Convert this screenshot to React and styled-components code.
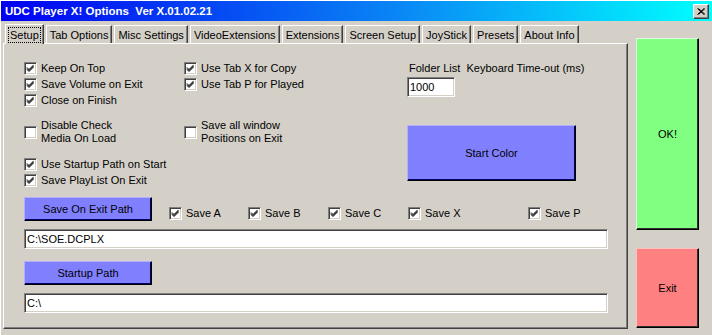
import styled, { createGlobalStyle } from 'styled-components';

const GlobalStyle = createGlobalStyle`
  body {
    margin: 0;
    background: #d4d0c8;
    font-family: "Liberation Sans", Arial, sans-serif;
    font-size: 11px;
    color: #000;
  }
`;

const Window = styled.div`
  width: 712px;
  height: 335px;
  box-sizing: border-box;
  background: #d4d0c8;
  border-left: 1px solid #fff;
  border-top: 1px solid #fff;
  overflow: hidden;
`;

const TitleBar = styled.div`
  height: 20px;
  display: flex;
  align-items: center;
  justify-content: space-between;
  padding: 0 3px 0 4px;
  background: linear-gradient(to right, #0000f0, #0a84f5 55%, #00ffff);
  color: #fff;
  font-weight: bold;
  font-size: 11.5px;
  white-space: pre;
`;

const CloseBox = styled.div`
  width: 14px;
  height: 13px;
  background: #d4d0c8;
  border: 1px solid;
  border-color: #fff #404040 #404040 #fff;
  box-shadow: inset -1px -1px #808080;
  display: flex;
  align-items: center;
  justify-content: center;
`;

const Main = styled.div`
  display: flex;
  gap: 8px;
  padding: 2px 0 0 2px;
`;

const TabArea = styled.div`
  width: 625px;
  flex: none;
  display: flex;
  flex-direction: column;
`;

const TabStrip = styled.div`
  display: flex;
  align-items: flex-end;
  height: 20px;
  padding-left: 2px;
  gap: 2px;
`;

const Tab = styled.div`
  height: ${p => (p.$active ? 20 : 18)}px;
  padding: 0 3px;
  box-sizing: border-box;
  display: flex;
  align-items: center;
  flex: none;
  white-space: nowrap;
  border: 1px solid;
  border-bottom: none;
  border-color: #fff #404040 transparent #fff;
  box-shadow: inset -1px 0 #808080;
  background: #d4d0c8;
  position: relative;
  z-index: ${p => (p.$active ? 1 : 0)};
  margin-bottom: ${p => (p.$active ? -1 : 0)}px;
`;

const TabText = styled.span`
  padding: 0 ${p => (p.$focus ? 1 : 0)}px;
  outline: ${p => (p.$focus ? '1px dotted #000' : 'none')};
  line-height: 14px;
`;

const Panel = styled.div`
  height: 286px;
  box-sizing: border-box;
  border: 1px solid;
  border-color: #fff #404040 #404040 #fff;
  box-shadow: inset -1px -1px #808080;
  padding: 16px 20px 0 20px;
`;

const TopGrid = styled.div`
  display: grid;
  grid-template-columns: 160px 223px 1fr;
  grid-template-rows: 48px 26px 32px;
  row-gap: 11px;
`;

const Group = styled.div`
  grid-column: ${p => p.$col};
  grid-row: ${p => p.$row};
  display: flex;
  flex-direction: column;
`;

const CheckRow = styled.label`
  display: flex;
  align-items: center;
  gap: 4px;
  height: ${p => (p.$tall ? 26 : 16)}px;
  width: ${p => (p.$w ? `${p.$w}px` : 'auto')};
  flex: none;
  line-height: 13px;
  white-space: pre;
`;

const Box = styled.span`
  width: 13px;
  height: 13px;
  box-sizing: border-box;
  background: #fff;
  border: 1px solid;
  border-color: #808080 #fff #fff #808080;
  box-shadow: inset 1px 1px #404040, inset -1px -1px #d4d0c8;
  display: flex;
  align-items: center;
  justify-content: center;
  flex: none;
`;

const Side = styled.div`
  grid-column: 3;
  grid-row: 1 / 4;
  display: flex;
  flex-direction: column;
  align-items: flex-start;
`;

const FieldLabel = styled.div`
  line-height: 16px;
  padding-left: 2px;
  white-space: pre;
`;

const Field = styled.div`
  width: ${p => p.$w}px;
  height: 20px;
  margin-top: ${p => p.$mt || 0}px;
  box-sizing: border-box;
  background: #fff;
  border: 1px solid;
  border-color: #808080 #fff #fff #808080;
  box-shadow: inset 1px 1px #404040, inset -1px -1px #d4d0c8;
  padding: 0 2px;
  display: flex;
  align-items: center;
`;

const ColorButton = styled.div`
  width: ${p => p.$w}px;
  height: ${p => p.$h}px;
  margin-top: ${p => p.$mt || 0}px;
  box-sizing: border-box;
  background: ${p => p.$bg};
  border: 1px solid;
  border-color: ${p => p.$light} #000 #000 ${p => p.$light};
  box-shadow: inset -1px -1px ${p => p.$shade};
  display: flex;
  align-items: center;
  justify-content: center;
  flex: none;
`;

const SaveRow = styled.div`
  display: flex;
  align-items: flex-start;
  margin-top: 9px;
`;

const SaveChecks = styled.div`
  display: flex;
  margin: 8px 0 0 17px;
`;

const RightColumn = styled.div`
  display: flex;
  flex-direction: column;
  gap: 18px;
  padding-top: 15px;
`;

const Check = ({ checked, children, tall, w }) => (
  <CheckRow $tall={tall} $w={w}>
    <Box>
      {checked && (
        <svg width="9" height="9" viewBox="0 0 9 9">
          <path d="M1 3.5 L3 5.5 L7.5 1 M1 4.5 L3 6.5 L7.5 2 M1 5.5 L3 7.5 L7.5 3" stroke="#000" strokeWidth="1" fill="none" />
        </svg>
      )}
    </Box>
    <span>{children}</span>
  </CheckRow>
);

const tabs = ['Setup', 'Tab Options', 'Misc Settings', 'VideoExtensions', 'Extensions', 'Screen Setup', 'JoyStick', 'Presets', 'About Info'];

const blue = { $bg: '#8080ff', $light: '#b0b0ff', $shade: '#000060' };

export default function App() {
  return (
    <>
      <GlobalStyle />
      <Window>
        <TitleBar>
          <span>UDC Player X! Options  Ver X.01.02.21</span>
          <CloseBox>
            <svg width="8" height="7" viewBox="0 0 8 7">
              <path d="M0.5 0.5 L7 6.5 M1.5 0.5 L8 6.5 M7 0.5 L0.5 6.5 M8 0.5 L1.5 6.5" stroke="#000" strokeWidth="1" />
            </svg>
          </CloseBox>
        </TitleBar>
        <Main>
          <TabArea>
            <TabStrip>
              {tabs.map((t, i) => (
                <Tab key={t} $active={i === 0}>
                  <TabText $focus={i === 0}>{t}</TabText>
                </Tab>
              ))}
            </TabStrip>
            <Panel>
              <TopGrid>
                <Group $col={1} $row={1}>
                  <Check checked>Keep On Top</Check>
                  <Check checked>Save Volume on Exit</Check>
                  <Check checked>Close on Finish</Check>
                </Group>
                <Group $col={1} $row={2}>
                  <Check tall>{'Disable Check\nMedia On Load'}</Check>
                </Group>
                <Group $col={1} $row={3}>
                  <Check checked>Use Startup Path on Start</Check>
                  <Check checked>Save PlayList On Exit</Check>
                </Group>
                <Group $col={2} $row={1}>
                  <Check checked>Use Tab X for Copy</Check>
                  <Check checked>Use Tab P for Played</Check>
                </Group>
                <Group $col={2} $row={2}>
                  <Check tall>{'Save all window\nPositions on Exit'}</Check>
                </Group>
                <Side>
                  <FieldLabel>Folder List  Keyboard Time-out (ms)</FieldLabel>
                  <Field $w={48} $mt={1}>1000</Field>
                  <ColorButton {...blue} $w={169} $h={56} $mt={28}>Start Color</ColorButton>
                </Side>
              </TopGrid>
              <SaveRow>
                <ColorButton {...blue} $w={128} $h={24}>Save On Exit Path</ColorButton>
                <SaveChecks>
                  <Check checked w={79}>Save A</Check>
                  <Check checked w={80}>Save B</Check>
                  <Check checked w={80}>Save C</Check>
                  <Check checked w={120}>Save X</Check>
                  <Check checked>Save P</Check>
                </SaveChecks>
              </SaveRow>
              <Field $w={584} $mt={8}>C:\SOE.DCPLX</Field>
              <ColorButton {...blue} $w={128} $h={24} $mt={12}>Startup Path</ColorButton>
              <Field $w={584} $mt={8}>C:\</Field>
            </Panel>
          </TabArea>
          <RightColumn>
            <ColorButton $bg="#80ff80" $light="#e0ffe0" $shade="#303030" $w={63} $h={192}>OK!</ColorButton>
            <ColorButton $bg="#ff8080" $light="#ffc0c0" $shade="#303030" $w={63} $h={80}>Exit</ColorButton>
          </RightColumn>
        </Main>
      </Window>
    </>
  );
}
